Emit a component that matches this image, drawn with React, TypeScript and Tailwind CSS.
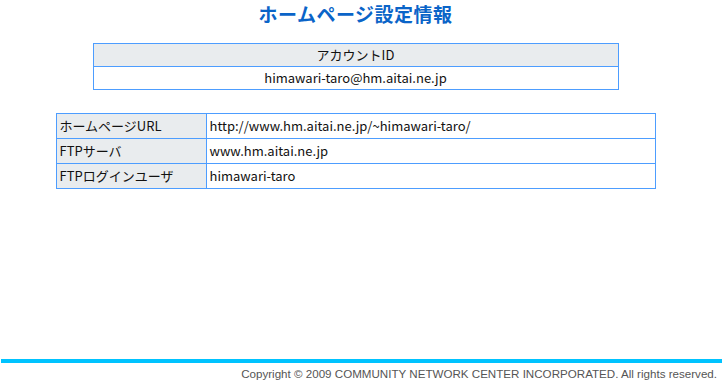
export default function App() {
  const rows = [
    { label: 'ホームページURL', value: 'http://www.hm.aitai.ne.jp/~himawari-taro/' },
    { label: 'FTPサーバ', value: 'www.hm.aitai.ne.jp' },
    { label: 'FTPログインユーザ', value: 'himawari-taro' },
  ];

  return (
    <div className="w-[722px] h-[391px] bg-white font-['Noto_Sans_CJK_JP','Noto_Sans',sans-serif] text-[#111]">
      <div className="h-[359px] w-[711px] flex flex-col items-center">
        <h1 className="mt-[2px] h-[24px] text-[19px] leading-[24px] font-semibold text-[#0a64c8] tracking-[0.5px]">
          ホームページ設定情報
        </h1>

        <table className="mt-[17px] w-[526px] border-collapse text-[13px]">
          <tbody>
            <tr>
              <th className="h-[23px] border border-[#4d9dff] bg-[#e9ecee] font-normal leading-[20px]">アカウントID</th>
            </tr>
            <tr>
              <td className="h-[23px] border border-[#4d9dff] text-center leading-[20px]">himawari-taro@hm.aitai.ne.jp</td>
            </tr>
          </tbody>
        </table>

        <table className="mt-[23px] w-[600px] border-collapse text-[13px]">
          <tbody>
            {rows.map((r) => (
              <tr key={r.label}>
                <th className="h-[25px] w-[150px] border border-[#4d9dff] bg-[#e9ecee] px-[3px] text-left font-normal leading-[20px]">
                  {r.label}
                </th>
                <td className="h-[25px] border border-[#4d9dff] px-[3px] leading-[20px]">{r.value}</td>
              </tr>
            ))}
          </tbody>
        </table>
      </div>

      <div className="ml-px h-[4px] bg-[#00c3ff]" />
      <div className="flex justify-end pr-[5px] pt-[4px]">
        <p className="font-['Liberation_Sans',Arial,sans-serif] text-[11.6px] leading-[14px] text-[#555]">
          Copyright © 2009 COMMUNITY NETWORK CENTER INCORPORATED. All rights reserved.
        </p>
      </div>
    </div>
  );
}
